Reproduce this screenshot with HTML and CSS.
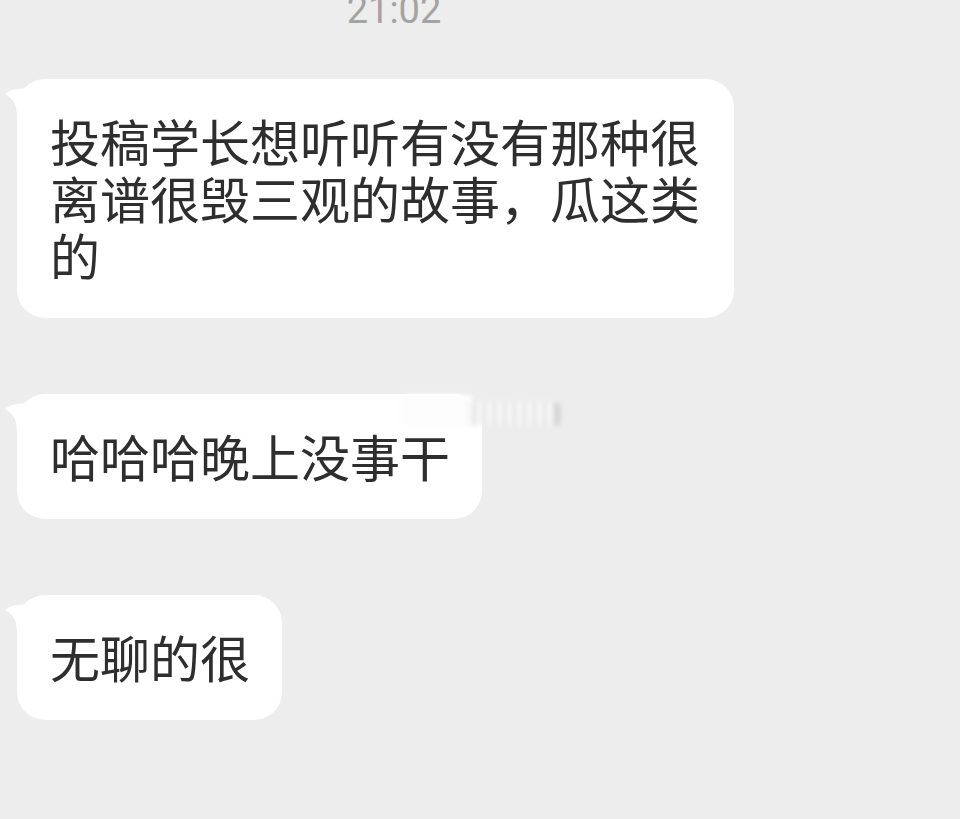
FILE: index.html
```html
<!DOCTYPE html>
<html lang="zh-CN">
<head>
<meta charset="utf-8">
<link rel="stylesheet" href="styles.css">
</head>
<body>
<div class="chat">
  <div class="time">21:02</div>
  <div class="msg">
    <svg class="tail" width="26" height="32" viewBox="0 0 26 32"><path d="M26 1 L12 2 Q4 3 0 7 Q7 11 10 17 Q12 23 12 32 L26 32 Z" fill="#fff"/></svg>
    <div class="bubble">投稿学长想听听有没有那种很离谱很毁三观的故事，瓜这类的</div>
  </div>
  <div class="msg">
    <svg class="tail" width="26" height="32" viewBox="0 0 26 32"><path d="M26 1 L12 2 Q4 3 0 7 Q7 11 10 17 Q12 23 12 32 L26 32 Z" fill="#fff"/></svg>
    <div class="bubble">哈哈哈晚上没事干</div>
    <div class="smudge"><span class="s1"></span><span class="s2"></span><span class="s3"></span></div>
  </div>
  <div class="msg">
    <svg class="tail" width="26" height="32" viewBox="0 0 26 32"><path d="M26 1 L12 2 Q4 3 0 7 Q7 11 10 17 Q12 23 12 32 L26 32 Z" fill="#fff"/></svg>
    <div class="bubble">无聊的很</div>
  </div>
</div>
</body>
</html>
```

FILE: styles.css
```css
html, body {
  margin: 0;
  padding: 0;
  background: #ededed;
  height: 819px;
  overflow: hidden;
}
.chat {
  display: flex;
  flex-direction: column;
  align-items: flex-start;
  gap: 76px;
}
.time {
  width: 788px;
  text-align: center;
  font-family: Roboto, "Liberation Sans", sans-serif;
  font-size: 38px;
  line-height: 38px;
  color: #a3a3a3;
  margin-top: -9px;
  margin-bottom: -26px;
}
.msg {
  position: relative;
  margin-left: 17px;
}
.tail {
  position: absolute;
  left: -12px;
  top: 8px;
}
.bubble {
  position: relative;
  background: #fff;
  border-radius: 28px;
  padding: 33px 32px 35px 33px;
  font-family: "Noto Sans CJK SC", "Noto Sans", sans-serif;
  font-size: 50px;
  line-height: 57px;
  color: #2e2e2e;
  max-width: 652px;
}
.smudge {
  position: absolute;
  left: 383px;
  top: 1px;
  width: 165px;
  height: 34px;
  filter: blur(2.5px);
}
.smudge span {
  position: absolute;
  display: block;
}
.smudge .s1 {
  left: 0;
  top: 0;
  width: 72px;
  height: 32px;
  background: #fdfdfd;
}
.smudge .s2 {
  left: 66px;
  top: 6px;
  width: 96px;
  height: 24px;
  background: repeating-linear-gradient(90deg, #f8f8f8 0 7px, #dedede 7px 10px);
}
.smudge .s3 {
  left: 154px;
  top: 8px;
  width: 7px;
  height: 22px;
  background: #d4d4d4;
}
```
